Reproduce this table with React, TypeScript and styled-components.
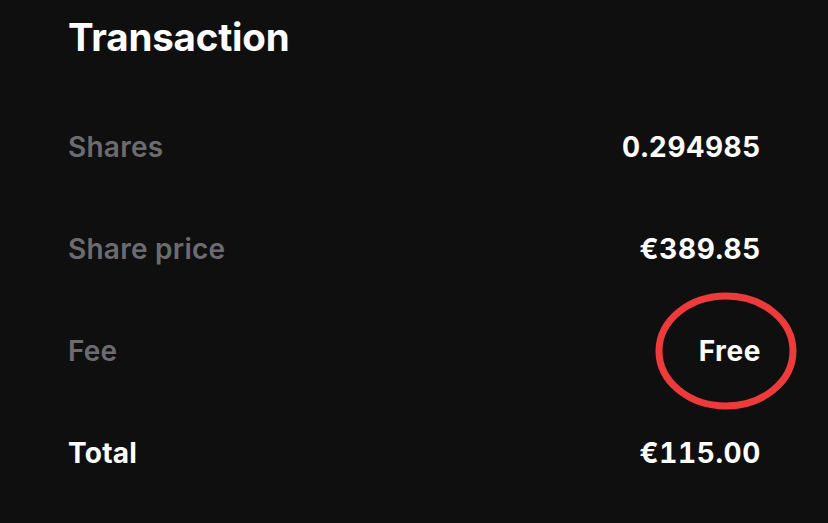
import React from "react";
import styled, { createGlobalStyle } from "styled-components";

const GlobalStyle = createGlobalStyle`
    html, body {
        margin: 0;
        padding: 0;
        background: #0f0f10;
    }
    body {
        font-family: Inter, "Noto Sans", sans-serif;
        -webkit-font-smoothing: antialiased;
    }
`;

interface RowItem {
    label: string;
    value: string;
    strong?: boolean;
    circled?: boolean;
}

const rows: RowItem[] = [
    { label: "Shares", value: "0.294985" },
    { label: "Share price", value: "€389.85" },
    { label: "Fee", value: "Free", circled: true },
    { label: "Total", value: "€115.00", strong: true },
];

export default function App() {
    return <Wrapper>
        <GlobalStyle />
        <Title>Transaction</Title>
        <List>
            {rows.map((row) => (
                <Row key={row.label}>
                    <Label $strong={row.strong}>{row.label}</Label>
                    <Value>
                        {row.value}
                        {row.circled && (
                            <Circle viewBox="0 0 144 120">
                                <ellipse cx="72" cy="60" rx="67" ry="55" fill="none" stroke="#ee3a3a" strokeWidth="7" />
                            </Circle>
                        )}
                    </Value>
                </Row>
            ))}
        </List>
    </Wrapper>;
}

const Wrapper = styled.div`
    width: 828px;
    height: 523px;
    box-sizing: border-box;
    padding: 14px 67px 0 68px;
    background: #0f0f10;
    overflow: hidden;
`;

const Title = styled.h1`
    margin: 0;
    font-size: 38.5px;
    font-weight: 700;
    letter-spacing: -0.2px;
    line-height: 46px;
    color: #ffffff;
`;

const List = styled.div`
    display: flex;
    flex-direction: column;
    margin-top: 36px;
`;

const Row = styled.div`
    display: flex;
    justify-content: space-between;
    align-items: center;
    height: 102px;
`;

const Label = styled.span<{ $strong?: boolean }>`
    font-size: 28px;
    font-weight: ${(p) => (p.$strong ? 700 : 600)};
    letter-spacing: 0.25px;
    color: ${(p) => (p.$strong ? "#ffffff" : "#6c6c70")};
`;

const Value = styled.span`
    position: relative;
    font-size: 28px;
    font-weight: 700;
    color: #ffffff;
    letter-spacing: 0.6px;
    font-variant-numeric: tabular-nums;
`;

const Circle = styled.svg`
    position: absolute;
    width: 144px;
    height: 120px;
    left: 50%;
    top: 50%;
    transform: translate(-50%, -50%);
    margin-left: -4px;
    pointer-events: none;
`;
